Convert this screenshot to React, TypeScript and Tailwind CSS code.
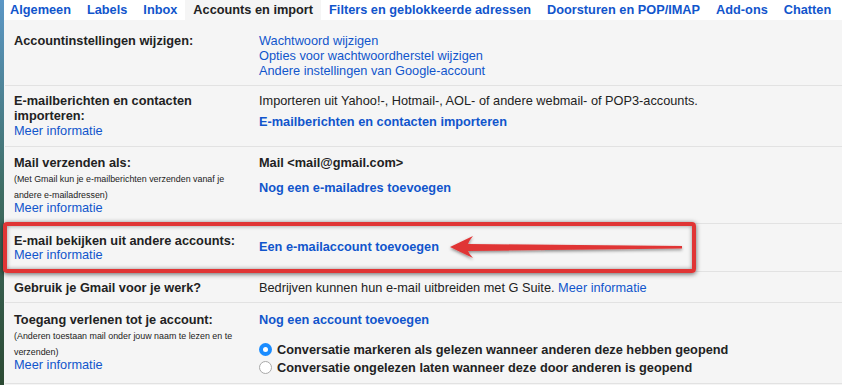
import React from 'react';

const tabs = [
    'Algemeen',
    'Labels',
    'Inbox',
    'Accounts en import',
    'Filters en geblokkeerde adressen',
    'Doorsturen en POP/IMAP',
    'Add-ons',
    'Chatten',
];

const Link: React.FC<{ children: React.ReactNode; bold?: boolean; className?: string }> = ({ children, bold, className = '' }) => (
    <a className={`text-[#1155cc] ${bold ? 'font-bold' : ''} ${className}`}>{children}</a>
);

const Label: React.FC<{ children: React.ReactNode }> = ({ children }) => (
    <div className="font-bold leading-[15px]">{children}</div>
);

const Small: React.FC<{ children: React.ReactNode }> = ({ children }) => (
    <div className="text-[8.9px] leading-[16px] mt-[1px]">{children}</div>
);

const Radio: React.FC<{ checked?: boolean; children: React.ReactNode }> = ({ checked, children }) => (
    <label className="flex items-center gap-[5px] h-[18px] font-bold">
        {checked ? (
            <span className="w-[13px] h-[13px] rounded-full bg-[#1a8cff] flex items-center justify-center">
                <span className="w-[5px] h-[5px] rounded-full bg-white" />
            </span>
        ) : (
            <span className="w-[13px] h-[13px] rounded-full bg-white border border-[#a9a9a9]" />
        )}
        {children}
    </label>
);

export default function App() {
    return (
        <div className="relative flex w-[842px] h-[385px] overflow-hidden text-[12.75px] text-[#222] font-['Liberation_Sans',Arial,sans-serif]">
            {/* Wallpaper peeking through on the left */}
            <div className="w-[4px] shrink-0 bg-gradient-to-b from-[#5c97c6] via-[#3f6d63] to-[#2c4a33]" />

            <div className="flex-1 min-w-0 bg-[#f5f5f5]">
                {/* Tabs */}
                <div className="flex h-[20px] bg-white whitespace-nowrap">
                    {tabs.map((t, i) => (
                        <div
                            key={t}
                            className={`shrink-0 flex items-center font-bold px-[8px] ${i === 0 ? 'pl-[6px]' : ''} ${t === 'Accounts en import' ? 'bg-[#f5f5f5] text-[#222]' : 'text-[#1155cc]'}`}
                        >
                            {t}
                        </div>
                    ))}
                </div>

                {/* Row 1 */}
                <div className="grid grid-cols-[245px_1fr] pl-[9px] h-[66px] pt-[12.5px] border-b border-[#e2e2e2] ml-[1px]">
                    <Label>Accountinstellingen wijzigen:</Label>
                    <div className="flex flex-col leading-[15px]">
                        <Link>Wachtwoord wijzigen</Link>
                        <Link>Opties voor wachtwoordherstel wijzigen</Link>
                        <Link>Andere instellingen van Google-account</Link>
                    </div>
                </div>

                {/* Row 2 */}
                <div className="grid grid-cols-[245px_1fr] pl-[9px] h-[61px] pt-[6.5px] border-b border-[#e2e2e2] ml-[1px]">
                    <div className="leading-[15px]">
                        <Label>E-mailberichten en contacten<br />importeren:</Label>
                        <Link>Meer informatie</Link>
                    </div>
                    <div className="flex flex-col leading-[15px]">
                        <span>Importeren uit Yahoo!-, Hotmail-, AOL- of andere webmail- of POP3-accounts.</span>
                        <Link bold className="mt-[6px]">E-mailberichten en contacten importeren</Link>
                    </div>
                </div>

                {/* Row 3 */}
                <div className="grid grid-cols-[245px_1fr] pl-[9px] h-[77px] pt-[7.5px] border-b border-[#e2e2e2] ml-[1px]">
                    <div className="flex flex-col">
                        <Label>Mail verzenden als:</Label>
                        <Small>(Met Gmail kun je e-mailberichten verzenden vanaf je<br />andere e-mailadressen)</Small>
                        <Link className="leading-[15px] -mt-[3px]">Meer informatie</Link>
                    </div>
                    <div className="flex flex-col leading-[15px]">
                        <span className="font-bold">Mail &lt;mail@gmail.com&gt;</span>
                        <Link bold className="mt-[10px]">Nog een e-mailadres toevoegen</Link>
                    </div>
                </div>

                {/* Row 4 */}
                <div className="grid grid-cols-[245px_1fr] pl-[9px] h-[48px] pt-[9px] border-b border-[#e2e2e2] ml-[1px]">
                    <div className="flex flex-col leading-[14px]">
                        <Label>E-mail bekijken uit andere accounts:</Label>
                        <Link>Meer informatie</Link>
                    </div>
                    <div className="leading-[15px] pt-[6px]">
                        <Link bold>Een e-mailaccount toevoegen</Link>
                    </div>
                </div>

                {/* Row 5 */}
                <div className="grid grid-cols-[245px_1fr] pl-[9px] h-[31px] pt-[7.5px] border-b border-[#e2e2e2] ml-[1px]">
                    <Label>Gebruik je Gmail voor je werk?</Label>
                    <div className="leading-[15px]">
                        Bedrijven kunnen hun e-mail uitbreiden met G Suite. <Link>Meer informatie</Link>
                    </div>
                </div>

                {/* Row 6 */}
                <div className="grid grid-cols-[245px_1fr] pl-[9px] h-[81px] pt-[8.5px] border-b border-[#e2e2e2] ml-[1px]">
                    <div className="flex flex-col">
                        <Label>Toegang verlenen tot je account:</Label>
                        <Small>(Anderen toestaan mail onder jouw naam te lezen en te<br />verzenden)</Small>
                        <Link className="leading-[15px] -mt-[3px]">Meer informatie</Link>
                    </div>
                    <div className="flex flex-col leading-[15px]">
                        <Link bold>Nog een account toevoegen</Link>
                        <div className="mt-[14px] flex flex-col">
                            <Radio checked>Conversatie markeren als gelezen wanneer anderen deze hebben geopend</Radio>
                            <Radio>Conversatie ongelezen laten wanneer deze door anderen is geopend</Radio>
                        </div>
                    </div>
                </div>
            </div>

            {/* Annotation: red highlight box */}
            <div className="absolute left-[3px] top-[222px] w-[693px] h-[51px] border-[4px] border-[#e03535] rounded-[4px] shadow-[0_1px_5px_rgba(0,0,0,0.6),inset_0_0_4px_rgba(0,0,0,0.4)]" />

            {/* Annotation: arrow */}
            <svg className="absolute left-[445px] top-[232px]" width="245" height="32" viewBox="0 0 245 32">
                <defs>
                    <filter id="sh" x="-10%" y="-50%" width="120%" height="200%">
                        <feDropShadow dx="0" dy="1.5" stdDeviation="1.5" floodColor="#000" floodOpacity="0.45" />
                    </filter>
                </defs>
                <path
                    d="M5 15 L28 4 Q24 9 23 12 L237 14 L237 16.5 L23 19 Q24 22 28 26 Z"
                    fill="#e03535"
                    filter="url(#sh)"
                />
            </svg>
        </div>
    );
}
